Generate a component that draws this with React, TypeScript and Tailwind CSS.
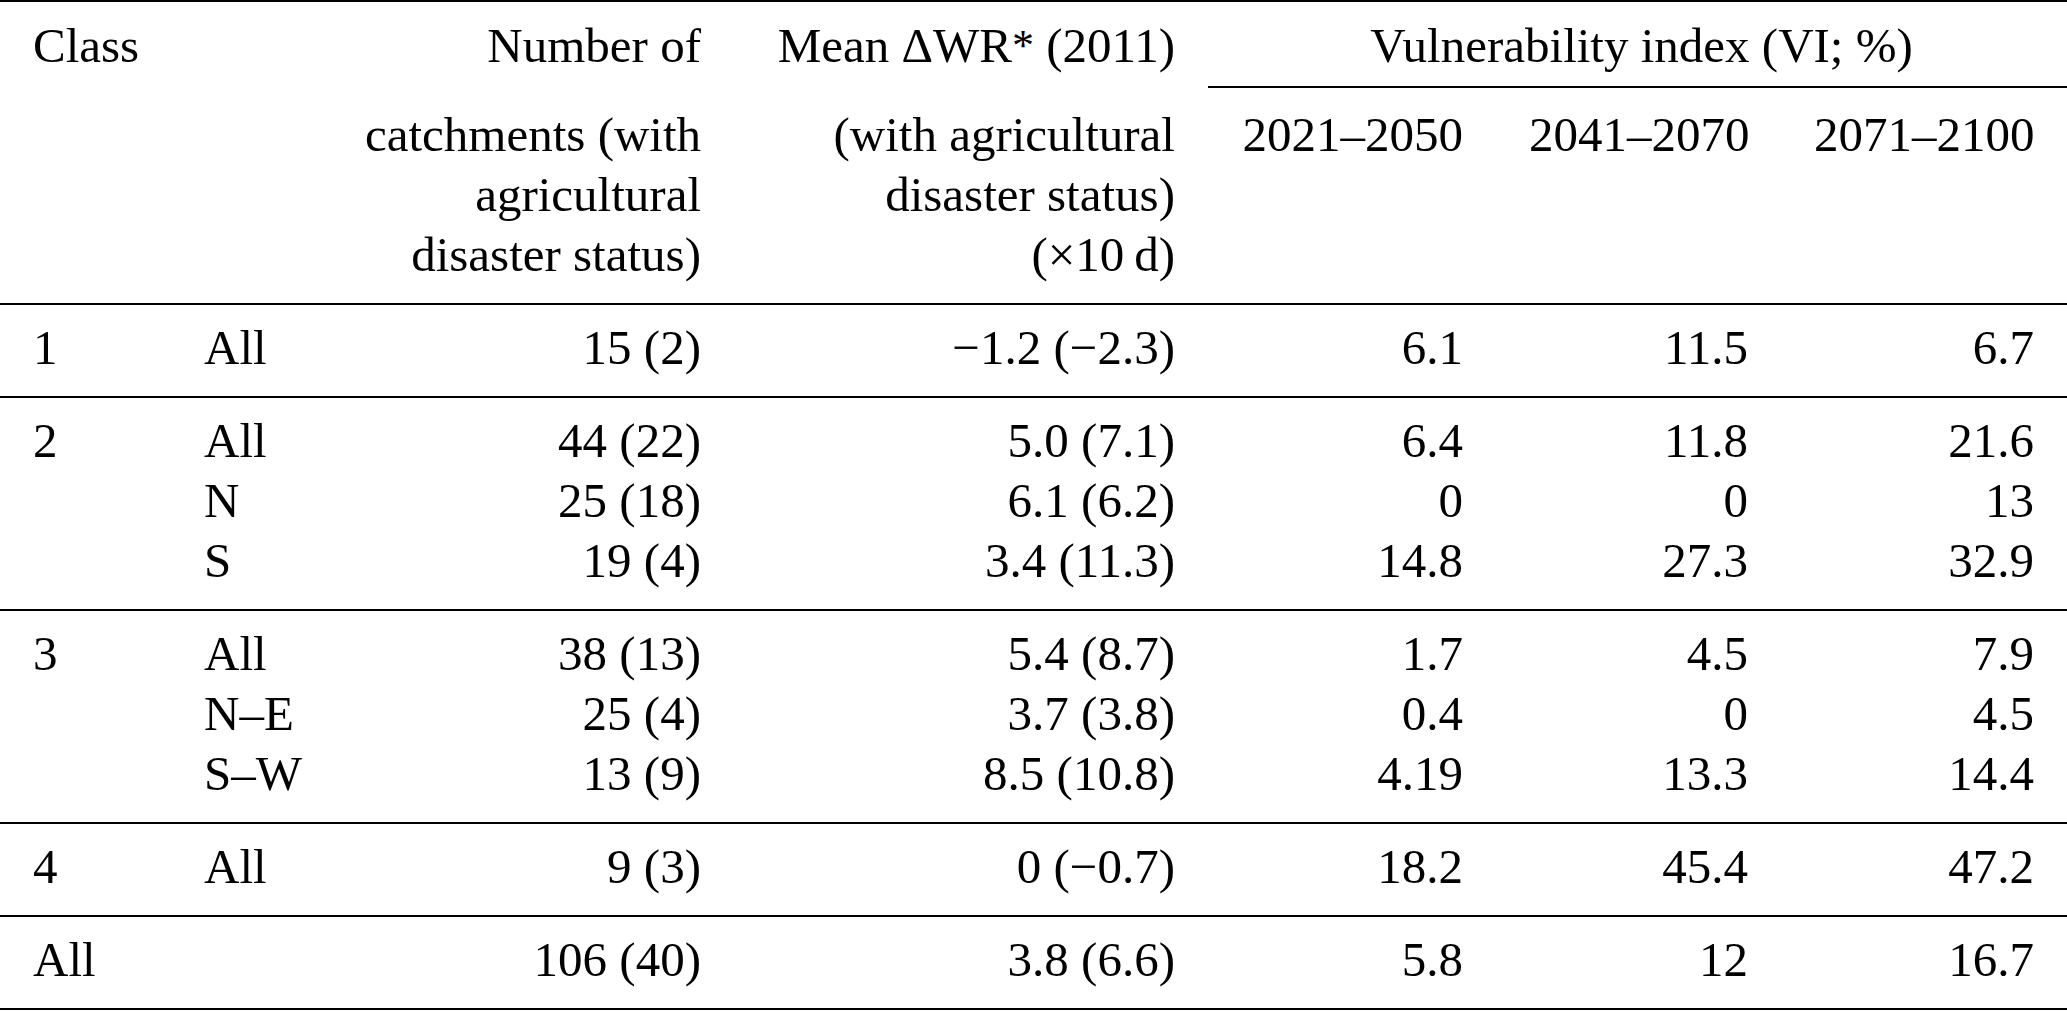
import type { ReactNode } from "react";

type Row = {
  region: string;
  count: string;
  meanDwr: string;
  vi: [string, string, string];
};

type Group = {
  label: string;
  rows: Row[];
};

const columns =
  "grid grid-cols-[171px_161px_402px_474px_288px_285px_286px]";

const groups: Group[] = [
  {
    label: "1",
    rows: [
      { region: "All", count: "15 (2)", meanDwr: "\u22121.2 (\u22122.3)", vi: ["6.1", "11.5", "6.7"] },
    ],
  },
  {
    label: "2",
    rows: [
      { region: "All", count: "44 (22)", meanDwr: "5.0 (7.1)", vi: ["6.4", "11.8", "21.6"] },
      { region: "N", count: "25 (18)", meanDwr: "6.1 (6.2)", vi: ["0", "0", "13"] },
      { region: "S", count: "19 (4)", meanDwr: "3.4 (11.3)", vi: ["14.8", "27.3", "32.9"] },
    ],
  },
  {
    label: "3",
    rows: [
      { region: "All", count: "38 (13)", meanDwr: "5.4 (8.7)", vi: ["1.7", "4.5", "7.9"] },
      { region: "N\u2013E", count: "25 (4)", meanDwr: "3.7 (3.8)", vi: ["0.4", "0", "4.5"] },
      { region: "S\u2013W", count: "13 (9)", meanDwr: "8.5 (10.8)", vi: ["4.19", "13.3", "14.4"] },
    ],
  },
  {
    label: "4",
    rows: [
      { region: "All", count: "9 (3)", meanDwr: "0 (\u22120.7)", vi: ["18.2", "45.4", "47.2"] },
    ],
  },
  {
    label: "All",
    rows: [
      { region: "", count: "106 (40)", meanDwr: "3.8 (6.6)", vi: ["5.8", "12", "16.7"] },
    ],
  },
];

function Rule() {
  return <div className="h-[2px] bg-black" />;
}

function Left({ children }: { children?: ReactNode }) {
  return <div className="whitespace-nowrap px-[33px]">{children}</div>;
}

function Right({ children }: { children?: ReactNode }) {
  return (
    <div className="whitespace-nowrap px-[33px] text-right">{children}</div>
  );
}

function TableHeader() {
  return (
    <>
      <div className={`${columns} pt-[14px]`}>
        <Left>Class</Left>
        <div />
        <Right>Number of</Right>
        <Right>
          Mean {"\u0394"}WR
          <span className="text-[44px] align-[2px]">*</span> (2011)
        </Right>
        <div className="col-span-3 whitespace-nowrap pl-[8px] text-center">
          Vulnerability index (VI; %)
        </div>
      </div>

      <div className={`${columns} pt-[10px] pb-4`}>
        <div className="col-span-3 col-start-5 h-[2px] bg-black" />
      </div>

      <div className={`${columns} pt-[1px] pb-[18px]`}>
        <div />
        <div />
        <Right>
          catchments (with
          <br />
          agricultural
          <br />
          disaster status)
        </Right>
        <Right>
          (with agricultural
          <br />
          disaster status)
          <br />({"\u00d7"}10{"\u2009"}d)
        </Right>
        <Right>2021{"\u2013"}2050</Right>
        <Right>2041{"\u2013"}2070</Right>
        <Right>2071{"\u2013"}2100</Right>
      </div>
    </>
  );
}

function GroupBlock({ group }: { group: Group }) {
  return (
    <div className={`${columns} pt-[13px] pb-[18px]`}>
      {group.rows.map((row, index) => (
        <div key={`${group.label}-${index}`} className="contents">
          <Left>{index === 0 ? group.label : ""}</Left>
          <Left>{row.region}</Left>
          <Right>{row.count}</Right>
          <Right>{row.meanDwr}</Right>
          {row.vi.map((value, i) => (
            <Right key={i}>{value}</Right>
          ))}
        </div>
      ))}
    </div>
  );
}

export default function App() {
  return (
    <main className="min-h-screen bg-white font-['Liberation_Serif',serif] text-[49px] leading-[60px] text-black">
      <div className="w-[2067px]">
        <Rule />
        <TableHeader />
        <Rule />
        {groups.map((group) => (
          <div key={group.label}>
            <GroupBlock group={group} />
            <Rule />
          </div>
        ))}
      </div>
    </main>
  );
}
